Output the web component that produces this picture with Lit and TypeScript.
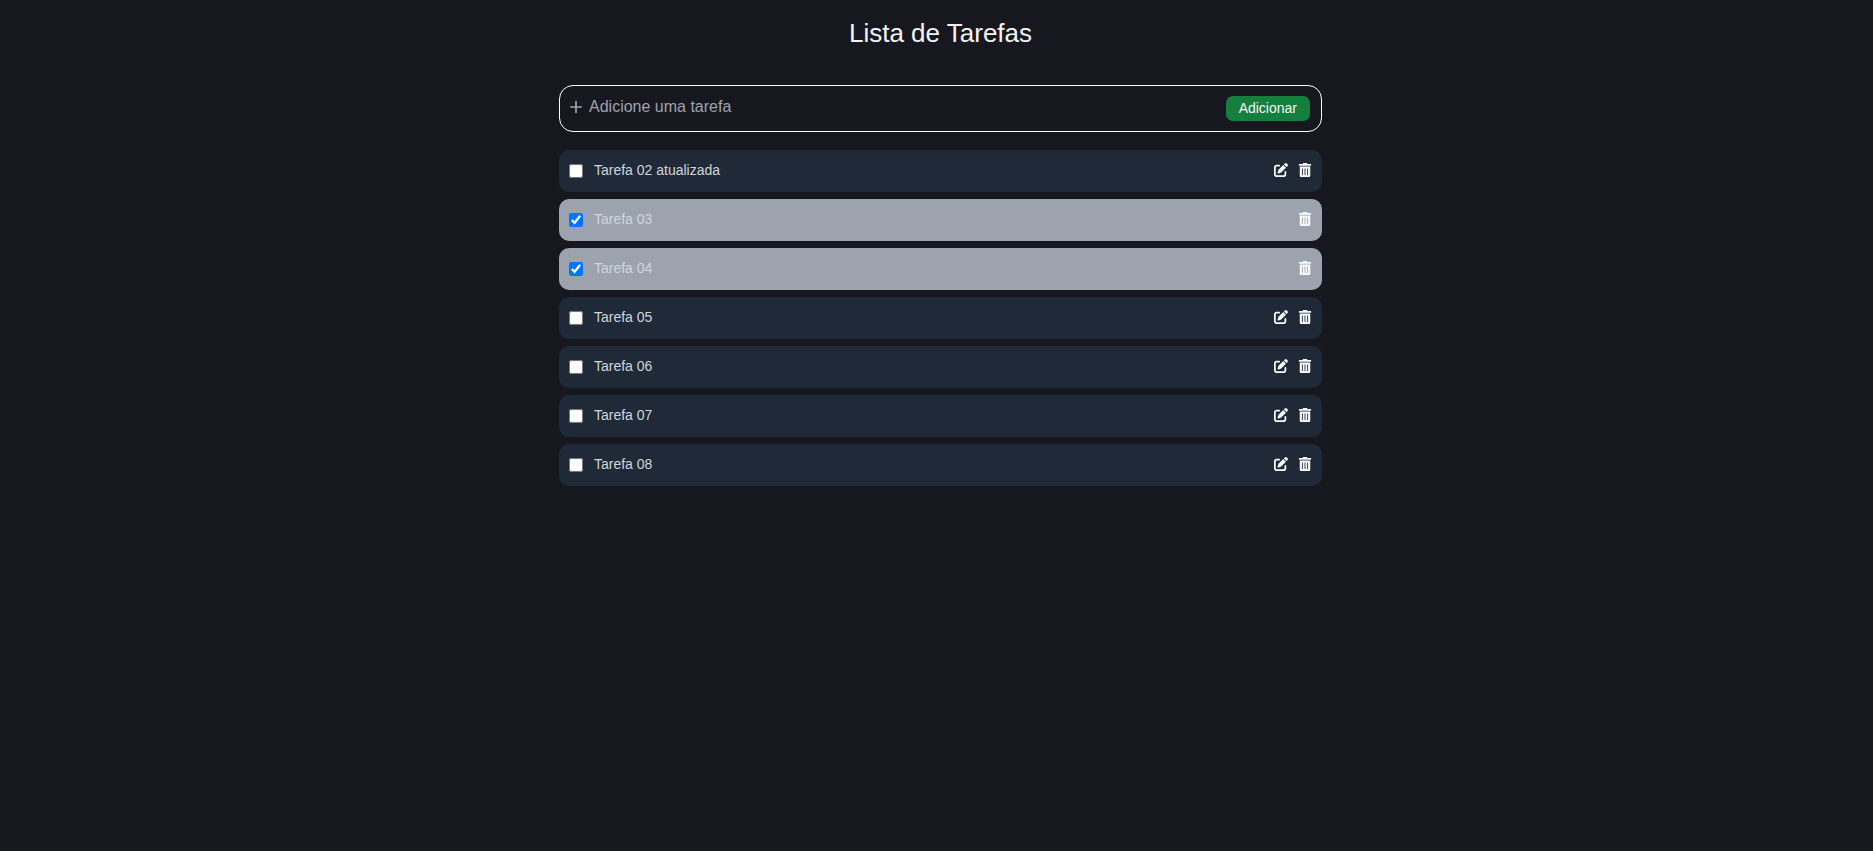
import { LitElement, html, css } from "lit";
import { customElement, state } from "lit/decorators.js";

interface Task {
  id: number;
  title: string;
  done: boolean;
}

@customElement("app-root")
export class AppRoot extends LitElement {
  static styles = css`
    :host {
      display: block;
      min-height: 100vh;
      box-sizing: border-box;
      padding-left: 8px;
      background: #17181f;
      color: #f3f4f6;
      font-family: "Liberation Sans", Arial, sans-serif;
      font-size: 14px;
      line-height: 21px;
    }
    * {
      box-sizing: border-box;
    }
    main {
      max-width: 763px;
      margin: 0 auto;
      padding-top: 15px;
    }
    h1 {
      margin: 0 0 34px;
      font-size: 26px;
      font-weight: 400;
      line-height: 36px;
      text-align: center;
    }
    form {
      display: flex;
      align-items: center;
      height: 47px;
      padding: 0 11px 0 7px;
      border: 1px solid #fff;
      border-radius: 14px;
      margin-bottom: 18px;
    }
    .field {
      display: flex;
      flex: 1;
      align-items: center;
      gap: 4px;
      padding-bottom: 4px;
      color: #9ca3af;
    }
    .field input {
      flex: 1;
      min-width: 0;
      padding: 0;
      border: 0;
      outline: 0;
      background: transparent;
      color: #f3f4f6;
      font: inherit;
      font-size: 16px;
      line-height: 20px;
    }
    .field input::placeholder {
      color: #9ca3af;
      opacity: 1;
    }
    .add {
      height: 25px;
      padding: 0 13px;
      border: 0;
      border-radius: 7px;
      background: #15803d;
      color: #f3f4f6;
      font: inherit;
    }
    ul {
      display: flex;
      flex-direction: column;
      gap: 7px;
      margin: 0;
      padding: 0;
      list-style: none;
    }
    li {
      display: flex;
      align-items: center;
      height: 42px;
      padding: 0 10px;
      border-radius: 10px;
      background: #1f2937;
      color: #d1d5db;
    }
    li.done {
      background: #9ca3af;
    }
    label {
      display: flex;
      flex: 1;
      align-items: center;
      gap: 11px;
    }
    label input {
      width: 14px;
      height: 14px;
      margin: 0;
    }
    label span,
    .actions {
      padding-bottom: 2px;
    }
    .actions {
      display: flex;
      gap: 10px;
    }
    .actions button {
      display: flex;
      padding: 0;
      border: 0;
      background: none;
      color: #f9fafb;
    }
    svg {
      display: block;
      fill: currentColor;
    }
  `;

  @state() private tasks: Task[] = [
    { id: 2, title: "Tarefa 02 atualizada", done: false },
    { id: 3, title: "Tarefa 03", done: true },
    { id: 4, title: "Tarefa 04", done: true },
    { id: 5, title: "Tarefa 05", done: false },
    { id: 6, title: "Tarefa 06", done: false },
    { id: 7, title: "Tarefa 07", done: false },
    { id: 8, title: "Tarefa 08", done: false },
  ];

  private add(e: Event) {
    e.preventDefault();
    const input = this.renderRoot.querySelector<HTMLInputElement>("#new-task")!;
    const title = input.value.trim();
    if (!title) return;
    this.tasks = [...this.tasks, { id: Date.now(), title, done: false }];
    input.value = "";
  }

  private toggle(id: number) {
    this.tasks = this.tasks.map((t) => (t.id === id ? { ...t, done: !t.done } : t));
  }

  private remove(id: number) {
    this.tasks = this.tasks.filter((t) => t.id !== id);
  }

  private renderTask(task: Task) {
    return html`<li class=${task.done ? "done" : ""}>
      <label>
        <input type="checkbox" .checked=${task.done} @change=${() => this.toggle(task.id)} />
        <span>${task.title}</span>
      </label>
      <div class="actions">
        ${task.done
          ? ""
          : html`<button type="button" aria-label="Editar">
              <svg width="14" height="14" viewBox="0 0 512 512">
                <path d="M471.600 21.700c-21.900-21.900-57.300-21.900-79.200 0L362.300 51.700l97.900 97.900 30.100-30.100c21.900-21.900 21.900-57.300 0-79.200L471.600 21.700zm-299.200 220c-6.100 6.100-10.800 13.600-13.500 21.900l-29.600 88.800c-2.900 8.600-.6 18.100 5.800 24.600s15.900 8.700 24.600 5.800l88.800-29.600c8.200-2.700 15.700-7.400 21.900-13.500L437.700 172.300 339.700 74.300 172.400 241.700zM96 64C43 64 0 107 0 160V416c0 53 43 96 96 96H352c53 0 96-43 96-96V320c0-17.700-14.300-32-32-32s-32 14.300-32 32v96c0 17.700-14.300 32-32 32H96c-17.700 0-32-14.300-32-32V160c0-17.700 14.300-32 32-32h96c17.700 0 32-14.300 32-32s-14.300-32-32-32H96z"/>
              </svg>
            </button>`}
        <button type="button" aria-label="Excluir" @click=${() => this.remove(task.id)}>
          <svg width="14" height="14" viewBox="0 0 448 512">
            <path d="M32 464a48 48 0 0 0 48 48h288a48 48 0 0 0 48-48V128H32zm272-256a16 16 0 0 1 32 0v224a16 16 0 0 1-32 0zm-96 0a16 16 0 0 1 32 0v224a16 16 0 0 1-32 0zm-96 0a16 16 0 0 1 32 0v224a16 16 0 0 1-32 0zM432 32H312l-9.400-18.700A24 24 0 0 0 281.100 0H166.800a23.720 23.720 0 0 0-21.400 13.300L136 32H16A16 16 0 0 0 0 48v32a16 16 0 0 0 16 16h416a16 16 0 0 0 16-16V48a16 16 0 0 0-16-16z"/>
          </svg>
        </button>
      </div>
    </li>`;
  }

  render() {
    return html`<main>
      <h1>Lista de Tarefas</h1>
      <form @submit=${this.add}>
        <div class="field">
          <svg width="18" height="18" viewBox="0 0 512 512" aria-hidden="true">
            <path d="M256 112v288M400 256H112" fill="none" stroke="currentColor" stroke-width="48" stroke-linecap="square" />
          </svg>
          <input id="new-task" type="text" aria-label="Adicione uma tarefa" placeholder="Adicione uma tarefa" />
        </div>
        <button class="add" type="submit">Adicionar</button>
      </form>
      <ul>
        ${this.tasks.map((t) => this.renderTask(t))}
      </ul>
    </main>`;
  }
}
